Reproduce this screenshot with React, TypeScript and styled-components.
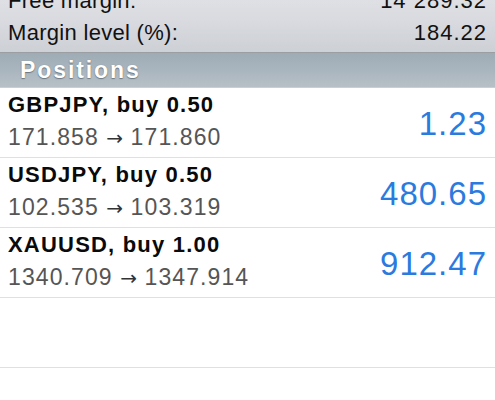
import * as React from "react";
import styled, { createGlobalStyle } from "styled-components";

const GlobalStyle = createGlobalStyle`
    html, body {
        margin: 0;
        padding: 0;
        background: #ffffff;
        overflow: hidden;
    }
    body {
        font-family: "Liberation Sans", Arial, Helvetica, sans-serif;
        -webkit-font-smoothing: antialiased;
    }
`;

const Screen = styled.div`
    width: 495px;
    height: 400px;
    overflow: hidden;
    background: #ffffff;
`;

// the account summary is scrolled, so only its last rows peek out
const Summary = styled.div`
    margin-top: -15px;
    padding: 0 9px 3px 8px;
    background: linear-gradient(to bottom, #e3e4e8 0%, #d8dadf 55%, #cdd0d5 100%);
    border-bottom: 1px solid #9b9ea3;
`;

const SummaryRow = styled.div`
    display: flex;
    justify-content: space-between;
    align-items: baseline;
    height: 32px;
    line-height: 32px;
    font-size: 22px;
    color: #111111;
`;

const SummaryLabel = styled.span`
    letter-spacing: 0.3px;
`;

const SummaryValue = styled.span`
    letter-spacing: 1px;
    margin-right: -1px;
`;

const SectionHeader = styled.div`
    height: 34px;
    display: flex;
    align-items: center;
    padding-left: 20px;
    background: linear-gradient(to bottom, #9eacb6 0%, #a9b5be 50%, #b7c0c7 100%);
    border-bottom: 1px solid #c9cfd4;
    color: #ffffff;
    font-size: 23px;
    font-weight: bold;
    letter-spacing: 1.9px;
    text-shadow: 0 1px 1px rgba(60, 70, 80, 0.55), 0 0 1px rgba(60, 70, 80, 0.35);
`;

const List = styled.div`
    display: flex;
    flex-direction: column;
`;

const Row = styled.div`
    height: 69px;
    box-sizing: content-box;
    display: flex;
    justify-content: space-between;
    align-items: center;
    padding: 0 9px 0 8px;
    border-bottom: 1px solid #e0e0e2;
`;

const Info = styled.div`
    display: flex;
    flex-direction: column;
    gap: 6px;
    padding-bottom: 2px;
`;

const Title = styled.div`
    font-size: 22px;
    line-height: 26px;
    font-weight: bold;
    letter-spacing: 1.2px;
    color: #0a0a0a;
`;

const Prices = styled.div`
    font-size: 23px;
    line-height: 26px;
    letter-spacing: 1.1px;
    color: #555555;
`;

const Arrow = styled.span`
    font-family: "DejaVu Sans", sans-serif;
    font-size: 20px;
    letter-spacing: 0;
    color: #333333;
`;

const Profit = styled.div`
    font-size: 33px;
    letter-spacing: 1px;
    margin-right: -1px;
    padding-top: 3px;
    color: #2b7bdf;
`;

type Position = {
    symbol: string;
    side: string;
    volume: string;
    open: string;
    current: string;
    profit: string;
};

const positions: Position[] = [
    { symbol: "GBPJPY", side: "buy", volume: "0.50", open: "171.858", current: "171.860", profit: "1.23" },
    { symbol: "USDJPY", side: "buy", volume: "0.50", open: "102.535", current: "103.319", profit: "480.65" },
    { symbol: "XAUUSD", side: "buy", volume: "1.00", open: "1340.709", current: "1347.914", profit: "912.47" },
];

export default function App() {
    return <Screen>
        <GlobalStyle />
        <Summary>
            <SummaryRow>
                <SummaryLabel>Free margin:</SummaryLabel>
                <SummaryValue>14 289.32</SummaryValue>
            </SummaryRow>
            <SummaryRow>
                <SummaryLabel>Margin level (%):</SummaryLabel>
                <SummaryValue>184.22</SummaryValue>
            </SummaryRow>
        </Summary>
        <SectionHeader>Positions</SectionHeader>
        <List>
            {positions.map(p => (
                <Row key={p.symbol}>
                    <Info>
                        <Title>{p.symbol}, {p.side} {p.volume}</Title>
                        <Prices>{p.open} <Arrow>→</Arrow> {p.current}</Prices>
                    </Info>
                    <Profit>{p.profit}</Profit>
                </Row>
            ))}
            <Row />
        </List>
    </Screen>;
}
